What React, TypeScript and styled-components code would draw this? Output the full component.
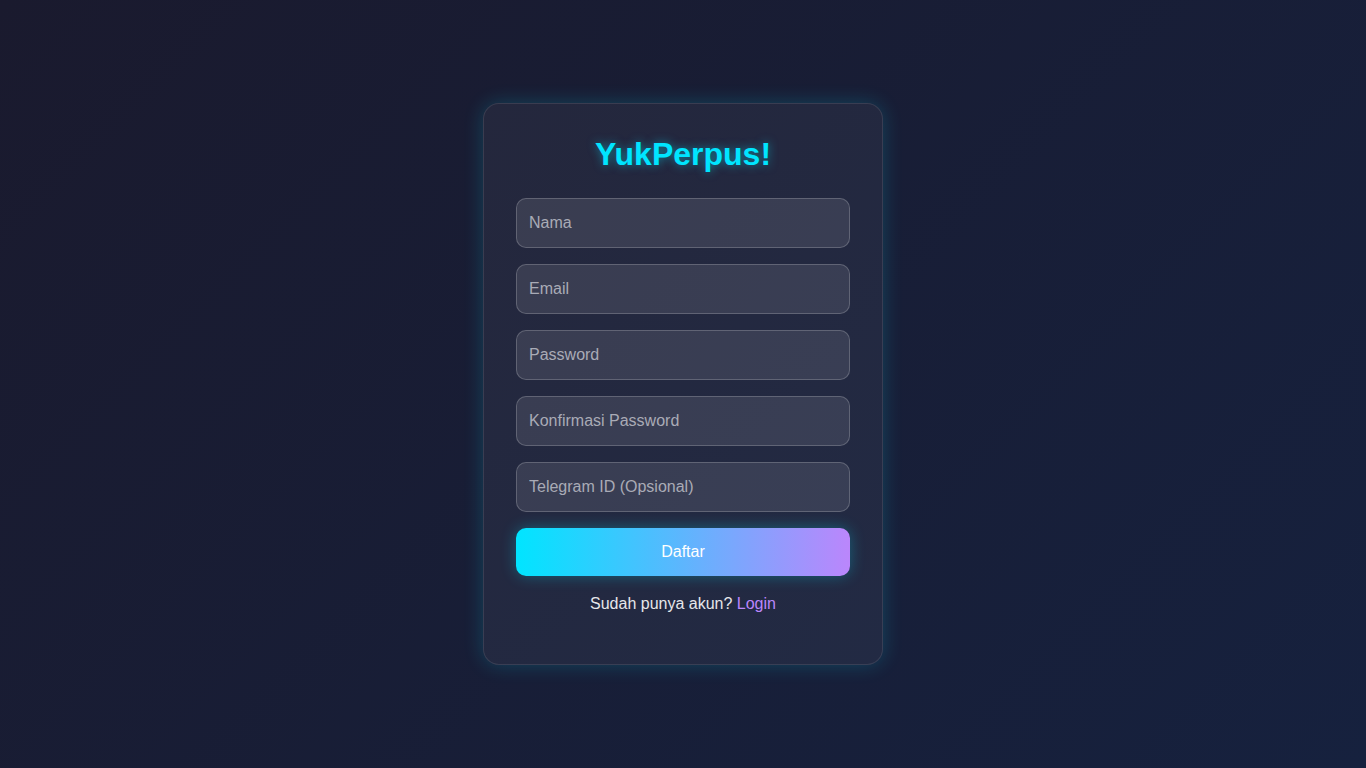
import styled, { createGlobalStyle } from 'styled-components';

const GlobalStyle = createGlobalStyle`
  * {
    box-sizing: border-box;
  }

  html,
  body {
    margin: 0;
    height: 100%;
  }

  body {
    font-family: 'Liberation Sans', Arial, sans-serif;
    background: linear-gradient(135deg, #1a1a2e 0%, #16213e 100%);
    color: #e0e0e0;
  }

  #root {
    min-height: 100%;
  }
`;

const Page = styled.main`
  display: flex;
  justify-content: center;
  align-items: center;
  height: 100vh;
`;

const Card = styled.section`
  display: flex;
  flex-direction: column;
  width: 400px;
  height: 562px;
  padding: 32px;
  border-radius: 16px;
  border: 1px solid rgba(255, 255, 255, 0.1);
  background: rgba(255, 255, 255, 0.05);
  box-shadow: 0 0 20px rgba(0, 229, 255, 0.2);
`;

const Title = styled.h1`
  margin: 0 0 25px;
  font-size: 32px;
  line-height: 37px;
  font-weight: 700;
  text-align: center;
  color: #00e5ff;
  text-shadow: 0 0 10px rgba(0, 229, 255, 0.5);
`;

const Form = styled.form`
  display: flex;
  flex-direction: column;
  row-gap: 16px;
`;

const Input = styled.input`
  width: 100%;
  height: 50px;
  padding: 0 12px;
  border-radius: 10px;
  border: 1px solid rgba(255, 255, 255, 0.2);
  background: rgba(255, 255, 255, 0.1);
  color: #fff;
  font-family: inherit;
  font-size: 16px;
  outline: none;

  &::placeholder {
    color: #a9abb6;
  }
`;

const SubmitButton = styled.button`
  height: 48px;
  border: none;
  border-radius: 10px;
  background: linear-gradient(90deg, #00e5ff 0%, #bb86fc 100%);
  box-shadow: 0 0 15px rgba(0, 229, 255, 0.3);
  color: #fff;
  font-family: inherit;
  font-size: 16px;
  cursor: pointer;
`;

const Footer = styled.p`
  margin: 19px 0 0;
  font-size: 16px;
  line-height: 18px;
  text-align: center;
  color: #e6e6ea;
`;

const LoginLink = styled.a`
  color: #bb86fc;
  text-decoration: none;
`;

export default function App() {
  return (
    <>
      <GlobalStyle />
      <Page>
        <Card>
          <Title>YukPerpus!</Title>
          <Form onSubmit={(e) => e.preventDefault()}>
            <Input type="text" placeholder="Nama" />
            <Input type="email" placeholder="Email" />
            <Input type="password" placeholder="Password" />
            <Input type="password" placeholder="Konfirmasi Password" />
            <Input type="text" placeholder="Telegram ID (Opsional)" />
            <SubmitButton type="submit">Daftar</SubmitButton>
          </Form>
          <Footer>
            Sudah punya akun? <LoginLink href="#">Login</LoginLink>
          </Footer>
        </Card>
      </Page>
    </>
  );
}
